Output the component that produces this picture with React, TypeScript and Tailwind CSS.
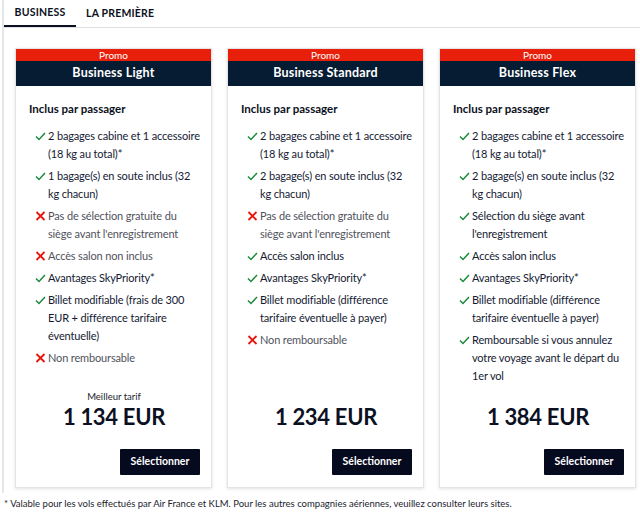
import React from "react";

type Feature = { ok: boolean; text: string };
type Fare = { name: string; price: string; best?: boolean; features: Feature[] };

const fares: Fare[] = [
  {
    name: "Business Light",
    price: "1 134 EUR",
    best: true,
    features: [
      { ok: true, text: "2 bagages cabine et 1 accessoire (18 kg au total)*" },
      { ok: true, text: "1 bagage(s) en soute inclus (32 kg chacun)" },
      { ok: false, text: "Pas de sélection gratuite du siège avant l'enregistrement" },
      { ok: false, text: "Accès salon non inclus" },
      { ok: true, text: "Avantages SkyPriority*" },
      { ok: true, text: "Billet modifiable (frais de 300 EUR + différence tarifaire éventuelle)" },
      { ok: false, text: "Non remboursable" },
    ],
  },
  {
    name: "Business Standard",
    price: "1 234 EUR",
    features: [
      { ok: true, text: "2 bagages cabine et 1 accessoire (18 kg au total)*" },
      { ok: true, text: "2 bagage(s) en soute inclus (32 kg chacun)" },
      { ok: false, text: "Pas de sélection gratuite du siège avant l'enregistrement" },
      { ok: true, text: "Accès salon inclus" },
      { ok: true, text: "Avantages SkyPriority*" },
      { ok: true, text: "Billet modifiable (différence tarifaire éventuelle à payer)" },
      { ok: false, text: "Non remboursable" },
    ],
  },
  {
    name: "Business Flex",
    price: "1 384 EUR",
    features: [
      { ok: true, text: "2 bagages cabine et 1 accessoire (18 kg au total)*" },
      { ok: true, text: "2 bagage(s) en soute inclus (32 kg chacun)" },
      { ok: true, text: "Sélection du siège avant l'enregistrement" },
      { ok: true, text: "Accès salon inclus" },
      { ok: true, text: "Avantages SkyPriority*" },
      { ok: true, text: "Billet modifiable (différence tarifaire éventuelle à payer)" },
      { ok: true, text: "Remboursable si vous annulez votre voyage avant le départ du 1er vol" },
    ],
  },
];

function Check() {
  return (
    <svg width="11" height="9" viewBox="0 0 11 9" className="shrink-0 mt-[5px]">
      <path d="M1 4.5 L4 7.5 L10 1" fill="none" stroke="#1b8a3c" strokeWidth="1.5" />
    </svg>
  );
}

function Cross() {
  return (
    <svg width="11" height="10" viewBox="0 0 11 10" className="shrink-0 mt-[4px]">
      <path d="M1.5 1 L9.5 9 M9.5 1 L1.5 9" fill="none" stroke="#e8150c" strokeWidth="1.8" />
    </svg>
  );
}

function FareCard({ fare }: { fare: Fare }) {
  return (
    <div className="flex flex-col bg-white border border-[#e3e3e8] shadow-[0_1px_3px_rgba(0,0,0,0.12)]">
      <div className="bg-[#e81f0a] text-white text-[10px] leading-[12px] h-[12px] text-center">Promo</div>
      <div className="bg-[#051c33] text-white text-[12.5px] font-bold h-[25px] flex items-center justify-center tracking-[0.2px]">
        {fare.name}
      </div>

      <div className="pl-[13px] pr-[9px] pt-[14px] flex-1 flex flex-col">
        <div className="text-[11.5px] font-bold text-[#0b1022] mb-[10px]">Inclus par passager</div>
        <ul className="flex flex-col gap-[4px]">
          {fare.features.map((f, i) => (
            <li key={i} className="flex gap-[2px] pl-[6px]">
              {f.ok ? <Check /> : <Cross />}
              <span
                className={`text-[11px] leading-[18px] tracking-[-0.15px] ${f.ok ? "text-[#141a33]" : "text-[#50525c]"}`}
              >
                {f.text}
              </span>
            </li>
          ))}
        </ul>

        <div className="mt-auto pt-[5px] flex flex-col items-center pr-[3px]">
          <div className="h-[14px] text-[9.5px] text-[#1a1d2e] leading-[14px]">{fare.best ? "Meilleur tarif" : ""}</div>
          <div className="text-[22px] font-bold text-[#0b1022] leading-[26px] tracking-[-0.3px]">{fare.price}</div>
        </div>
        <div className="flex justify-end mt-[19px] mb-[12px] pr-[2px]">
          <button className="bg-[#050a1f] text-white text-[10.5px] font-bold h-[26px] w-[80px] rounded-[1px]">
            Sélectionner
          </button>
        </div>
      </div>
    </div>
  );
}

export default function App() {
  return (
    <div className="w-[640px] h-[513px] bg-white overflow-hidden" style={{ fontFamily: "Lato, 'Open Sans', sans-serif" }}>
      <div className="border-l-2 border-[#e6e6ea] ml-[2px] pb-[5px]">
        <nav className="flex border-b border-[#dedee3] h-[28px]">
          <div className="w-[72px] flex items-center justify-center border-b-2 border-[#0b1022] text-[10.5px] font-bold text-[#0b1022] tracking-[0.2px]">
            BUSINESS
          </div>
          <div className="px-[10px] flex items-center text-[10.5px] font-bold text-[#0b1022] tracking-[0.2px]">
            LA PREMIÈRE
          </div>
        </nav>

        <div className="grid grid-cols-[197px_197px_197px] gap-[15px] pl-[11px] pt-[20px]">
          {fares.map((f) => (
            <FareCard key={f.name} fare={f} />
          ))}
        </div>
      </div>
      <p className="px-[4px] pt-[4px] text-[9.5px] text-[#1a1d2e]">
        * Valable pour les vols effectués par Air France et KLM. Pour les autres compagnies aériennes, veuillez consulter leurs sites.
      </p>
    </div>
  );
}
